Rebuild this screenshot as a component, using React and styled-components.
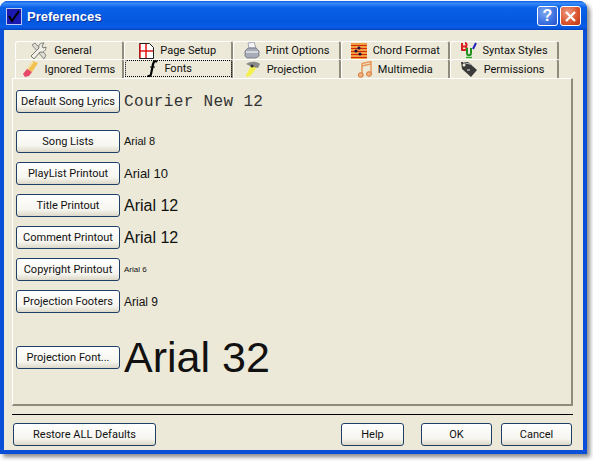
import React from 'react';
import styled, { createGlobalStyle } from 'styled-components';

const uiFont = 'Roboto, "Noto Sans", sans-serif';

const GlobalStyle = createGlobalStyle`
  html, body {
    margin: 0;
    background: #fff;
  }
`;

const Page = styled.div`
  width: 593px;
  height: 461px;
  padding: 1px 0 0 0;
  box-sizing: border-box;
  overflow: hidden;
`;

const Window = styled.div`
  width: 587px;
  height: 453px;
  box-sizing: border-box;
  display: flex;
  flex-direction: column;
  border-radius: 8px 8px 0 0;
  background: #0a4fd8;
  box-shadow: 3px 3px 4px rgba(60, 60, 60, 0.6);
`;

const TitleBar = styled.div`
  height: 29px;
  flex: none;
  box-sizing: border-box;
  display: flex;
  align-items: center;
  padding: 1px 6px 0 6px;
  border-radius: 8px 8px 0 0;
  background: linear-gradient(180deg, #0a5ae6 0%, #3b8cf8 8%, #0a62e8 22%, #0357de 70%, #0a5ce8 90%, #0344c0 100%);
`;

const Title = styled.div`
  flex: 1;
  margin-left: 5px;
  color: #fff;
  font: bold 13px "Liberation Sans", sans-serif;
  text-shadow: 1px 1px 0 #0a2f9a;
`;

const CaptionButton = styled.div`
  width: 21px;
  height: 20px;
  box-sizing: border-box;
  display: flex;
  align-items: center;
  justify-content: center;
  border: 1px solid #fff;
  border-radius: 3px;
  margin-left: 2px;
  color: #fff;
  font: bold 16px "Liberation Sans", sans-serif;
  background: ${p => p.$close
    ? 'radial-gradient(circle at 35% 30%, #ee9a80, #d9532e 60%, #b8330f)'
    : 'radial-gradient(circle at 35% 30%, #7fa8f0, #3c70e0 60%, #2450c8)'};
`;

const Client = styled.div`
  flex: 1;
  margin: 0 4px 4px 4px;
  padding: 11px 10px 0 8px;
  background: #ece9d8;
  display: flex;
  flex-direction: column;
  min-height: 0;
`;

const TabRow = styled.div`
  display: flex;
  margin-left: 3px;
  height: ${p => p.$height}px;
  flex: none;
`;

const Tab = styled.div`
  width: 108.8px;
  box-sizing: border-box;
  display: flex;
  align-items: center;
  justify-content: center;
  gap: 6px;
  color: #111;
  font: 11px ${uiFont};
  background: #ece9d8;
  border-top: 1px solid #fff;
  border-left: 1px solid #fff;
  border-right: 2px solid #8f8c7c;
  border-radius: 3px 3px 0 0;
  outline: ${p => p.$active ? '1px dotted #000' : 'none'};
  outline-offset: -2px;
  padding-bottom: ${p => p.$active ? 2 : 0}px;
  padding-right: ${p => p.$shift || 0}px;
`;

const Panel = styled.div`
  height: 328px;
  flex: none;
  box-sizing: border-box;
  display: flex;
  flex-direction: column;
  gap: 9px;
  padding: 11px 0 0 3px;
  border-top: 1px solid #fff;
  border-left: 1px solid #fff;
  border-right: 2px solid #8f8c7c;
  border-bottom: 2px solid #8f8c7c;
`;

const FontRow = styled.div`
  display: flex;
  align-items: center;
  gap: 4px;
  height: 23px;
  flex: none;
  margin-top: ${p => p.$top || 0}px;
`;

const Button = styled.div`
  width: ${p => p.$width}px;
  height: 23px;
  flex: none;
  box-sizing: border-box;
  display: flex;
  align-items: center;
  justify-content: center;
  color: #111;
  font: 11px ${uiFont};
  white-space: nowrap;
  border: 1px solid #1f3f66;
  border-radius: 3px;
  background: linear-gradient(180deg, #ffffff 0%, #f6f5ef 70%, #dcd8c8 100%);
`;

const Sample = styled.span`
  color: ${p => p.$mono ? '#333' : '#111'};
  white-space: nowrap;
  line-height: 1;
  font-family: ${p => p.$mono ? '"Liberation Mono", monospace' : '"Liberation Sans", sans-serif'};
  font-size: ${p => p.$size}px;
  letter-spacing: ${p => p.$mono ? '0.35px' : '0'};
`;

const Separator = styled.div`
  height: 1px;
  flex: none;
  margin-top: 8px;
  background: #000;
`;

const Footer = styled.div`
  display: flex;
  justify-content: space-between;
  margin: 8px 1px 0 1px;
`;

const FooterActions = styled.div`
  display: flex;
  align-items: center;
`;

const DialogButtons = styled.div`
  display: flex;
  gap: 9px;
  margin-left: 17px;
`;

const CheckIcon = () => (
  <svg width="16" height="17" viewBox="0 0 16 17">
    <rect x="0.5" y="0.5" width="15" height="16" fill="#1a1ab0" stroke="#b8c8f0" />
    <path d="M3 8l3 5 7-10" fill="none" stroke="#000" strokeWidth="2" />
  </svg>
);

const GeneralIcon = () => (
  <svg width="18" height="18" viewBox="0 0 18 18">
    <path d="M2 3l3-2 11 12-2 4z" fill="#ddddd5" stroke="#8a8a82" />
    <path d="M1 14l8-8c-1-3 1-5 5-5l-2 3 1 2 3-1c0 4-3 6-6 5l-6 7z" fill="#f0f0e8" stroke="#77776f" />
  </svg>
);

const PageIcon = () => (
  <svg width="15" height="16" viewBox="0 0 15 16">
    <path d="M.5.5h10l4 4v11H.5z" fill="#fff" stroke="#222" />
    <path d="M1 1v14M1 8h13M7 1v14" stroke="#e01818" strokeWidth="1.500" />
  </svg>
);

const PrinterIcon = () => (
  <svg width="16" height="17" viewBox="0 0 16 17">
    <path d="M4 1l6-1 2 6H5z" fill="#f4f4f4" stroke="#889" strokeWidth=".7" />
    <path d="M1 9l3-3h8l3 3v5l-3 2H3l-2-2z" fill="#a8acb8" stroke="#667" strokeWidth=".7" />
    <path d="M2 10h12" stroke="#e4e6ec" strokeWidth="1.500" />
  </svg>
);

const ChordIcon = () => (
  <svg width="16" height="16" viewBox="0 0 16 16">
    <rect width="16" height="16" fill="#f0a040" />
    <path d="M0 2.500h16M0 5.500h16M0 8.500h16M0 11.500h16M0 14.500h16" stroke="#d02808" />
    <circle cx="5" cy="8" r="1.600" fill="#201040" />
    <circle cx="8" cy="5" r="1.600" fill="#201040" />
    <circle cx="9" cy="11" r="1.600" fill="#201040" />
  </svg>
);

const SyntaxIcon = () => (
  <svg width="16" height="17" viewBox="0 0 16 17">
    <path d="M1 1v7h3c2 0 2-3.500 0-3.500H1M4 4.500c2 0 2-3.500 0-3.500" fill="none" stroke="#d82020" strokeWidth="2" />
    <path d="M6 6v5c0 3 4 3 4 0V6" fill="none" stroke="#209020" strokeWidth="2" />
    <path d="M5 15.500h6" stroke="#30b030" strokeWidth="1.500" />
    <path d="M12 7l3-6" stroke="#2020c0" strokeWidth="2" />
  </svg>
);

const EraserIcon = () => (
  <svg width="16" height="18" viewBox="0 0 16 18">
    <path d="M10 1l5 2-6 9-5-3z" fill="#f0c050" />
    <path d="M4 9l5 3-3 4-4 1-2-3z" fill="#e84868" />
    <path d="M10 2l-5 7" stroke="#f8e0a0" strokeWidth="1.500" />
  </svg>
);

const FontIcon = () => (
  <svg width="11" height="17" viewBox="0 0 11 17">
    <path d="M10 2C7-.5 6 3 5.500 7L4 14c-.5 2-2 3-3.500 1.500" fill="none" stroke="#000" strokeWidth="2.200" />
    <path d="M3 7h5" stroke="#000" />
  </svg>
);

const ProjectionIcon = () => (
  <svg width="18" height="17" viewBox="0 0 18 17">
    <path d="M8 5l6 1-5 7c-2 3-7 4-6 1z" fill="#f4f050" />
    <path d="M3 3c4-3 11-3 14 0l-2 4-5-1-3-1z" fill="#8a8a8a" />
    <circle cx="9" cy="5" r="1.500" fill="#333" />
  </svg>
);

const MusicIcon = () => (
  <svg width="14" height="17" viewBox="0 0 14 17">
    <path d="M4 13V2.500l9-2V12M4 5l9-2" fill="none" stroke="#e89858" strokeWidth="1.500" />
    <ellipse cx="2.800" cy="14" rx="2.500" ry="2.300" fill="#f0b080" stroke="#d87838" />
    <ellipse cx="11" cy="13" rx="2.500" ry="2.300" fill="#f0b080" stroke="#d87838" />
  </svg>
);

const TagIcon = () => (
  <svg width="18" height="17" viewBox="0 0 18 17">
    <path d="M1 1h7l9 8-6 7-9-8z" fill="#3a3a3a" />
    <path d="M3 1.500l9 2" stroke="#bbb" />
    <path d="M7 9h3" stroke="#eee" />
    <circle cx="4" cy="4" r="1.500" fill="#ece9d8" />
  </svg>
);

const topTabs = [
  { label: 'General', icon: <GeneralIcon />, shift: 16 },
  { label: 'Page Setup', icon: <PageIcon /> },
  { label: 'Print Options', icon: <PrinterIcon /> },
  { label: 'Chord Format', icon: <ChordIcon /> },
  { label: 'Syntax Styles', icon: <SyntaxIcon /> },
];

const bottomTabs = [
  { label: 'Ignored Terms', icon: <EraserIcon /> },
  { label: 'Fonts', icon: <FontIcon />, active: true, shift: 16 },
  { label: 'Projection', icon: <ProjectionIcon />, shift: 14 },
  { label: 'Multimedia', icon: <MusicIcon /> },
  { label: 'Permissions', icon: <TagIcon />, shift: 4 },
];

const fonts = [
  { button: 'Default Song Lyrics', sample: 'Courier New 12', size: 16, mono: true },
  { button: 'Song Lists', sample: 'Arial 8', size: 11, top: 8 },
  { button: 'PlayList Printout', sample: 'Arial 10', size: 13 },
  { button: 'Title Printout', sample: 'Arial 12', size: 16 },
  { button: 'Comment Printout', sample: 'Arial 12', size: 16 },
  { button: 'Copyright Printout', sample: 'Arial 6', size: 8 },
  { button: 'Projection Footers', sample: 'Arial 9', size: 12 },
  { button: 'Projection Font...', sample: 'Arial 32', size: 43, top: 24 },
];

export default function App() {
  return (
    <Page>
      <GlobalStyle />
      <Window>
        <TitleBar>
          <CheckIcon />
          <Title>Preferences</Title>
          <CaptionButton>?</CaptionButton>
          <CaptionButton $close>
            <svg width="13" height="13" viewBox="0 0 13 13">
              <path d="M2 2l9 9M11 2l-9 9" stroke="#fff" strokeWidth="2.200" />
            </svg>
          </CaptionButton>
        </TitleBar>
        <Client>
          <TabRow $height={18}>
            {topTabs.map(t => <Tab key={t.label} $shift={t.shift}>{t.icon}{t.label}</Tab>)}
          </TabRow>
          <TabRow $height={19}>
            {bottomTabs.map(t => <Tab key={t.label} $active={t.active} $shift={t.shift}>{t.icon}{t.label}</Tab>)}
          </TabRow>
          <Panel>
            {fonts.map(f => (
              <FontRow key={f.button} $top={f.top}>
                <Button $width={104}>{f.button}</Button>
                <Sample $size={f.size} $mono={f.mono}>{f.sample}</Sample>
              </FontRow>
            ))}
          </Panel>
          <Separator />
          <Footer>
            <Button $width={143}>Restore ALL Defaults</Button>
            <FooterActions>
              <Button $width={63}>Help</Button>
              <DialogButtons>
                <Button $width={71}>OK</Button>
                <Button $width={71}>Cancel</Button>
              </DialogButtons>
            </FooterActions>
          </Footer>
        </Client>
      </Window>
    </Page>
  );
}
